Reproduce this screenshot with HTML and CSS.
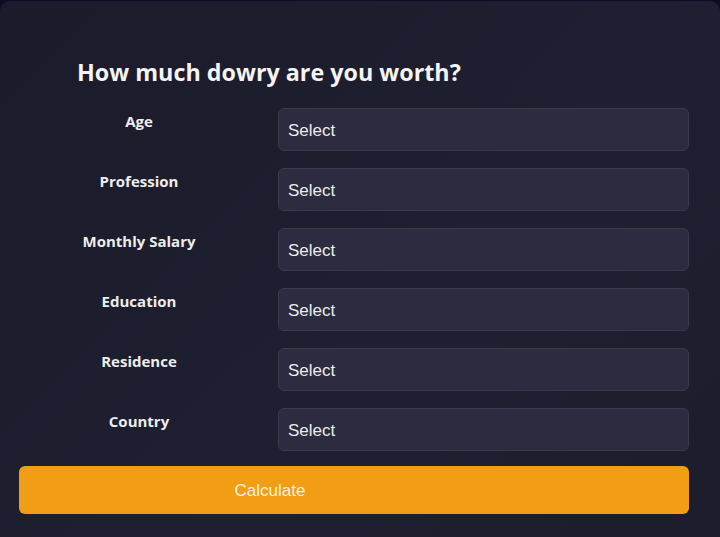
FILE: index.html
```html
<!DOCTYPE html>
<html lang="en">
<head>
    <meta charset="UTF-8">
    <meta name="viewport" content="width=device-width, initial-scale=1.0">
    <title>Dowry Calculator</title>
    <link rel="stylesheet" href="styles.css">
</head>
<body>
    <div class="card">
        <h1 class="title">How much dowry are you worth?</h1>

        <form class="form">
            <div class="row">
                <label class="label" for="age">Age</label>
                <select id="age" class="select"><option>Select</option></select>
            </div>
            <div class="row">
                <label class="label" for="profession">Profession</label>
                <select id="profession" class="select"><option>Select</option></select>
            </div>
            <div class="row">
                <label class="label" for="salary">Monthly Salary</label>
                <select id="salary" class="select"><option>Select</option></select>
            </div>
            <div class="row">
                <label class="label" for="education">Education</label>
                <select id="education" class="select"><option>Select</option></select>
            </div>
            <div class="row">
                <label class="label" for="residence">Residence</label>
                <select id="residence" class="select"><option>Select</option></select>
            </div>
            <div class="row">
                <label class="label" for="country">Country</label>
                <select id="country" class="select"><option>Select</option></select>
            </div>

            <button type="button" class="calc">Calculate</button>
        </form>
    </div>
</body>
</html>
```

FILE: styles.css
```css
html, body {
    margin: 0;
    height: 100%;
}

body {
    background: #0c0c26;
    font-family: 'Open Sans', 'Noto Sans', sans-serif;
}

.card {
    box-sizing: border-box;
    height: 537px;
    margin-top: 1px;
    padding: 57px 31px 0 19px;
    border-radius: 10px 10px 0 0;
    background: linear-gradient(135deg, #1b1b2b 0%, #1e1f30 60%, #1c1d2c 100%); /* slight sheen over the dark card */
}

.title {
    margin: 0 0 21px 58px;
    font-size: 23.3px;
    line-height: 29px;
    font-weight: 700;
    color: #f4f4f4;
}

.form {
    display: flex;
    flex-direction: column;
    gap: 17px;
}

.row {
    display: grid;
    grid-template-columns: 240px 1fr;
    column-gap: 19px;
}

.label {
    padding-top: 2px;
    text-align: center;
    font-size: 15px;
    line-height: 22px;
    font-weight: 700;
    color: #ededed;
}

.select {
    -webkit-appearance: none;
    appearance: none;
    height: 43px;
    padding: 1px 9px 0;
    background: #2c2b40;
    border: 1px solid #3a3a4d;
    border-radius: 6px;
    font-family: 'Liberation Sans', Arial, sans-serif;
    font-size: 17px;
    color: #ececec;
}

.calc {
    height: 48px;
    margin-top: -2px;
    padding: 2px 168px 0 0;
    background: #f29e15;
    border: none;
    border-radius: 6px;
    font-family: 'Liberation Sans', Arial, sans-serif;
    font-size: 17px;
    color: #fdf1dc;
    cursor: pointer;
}
```
